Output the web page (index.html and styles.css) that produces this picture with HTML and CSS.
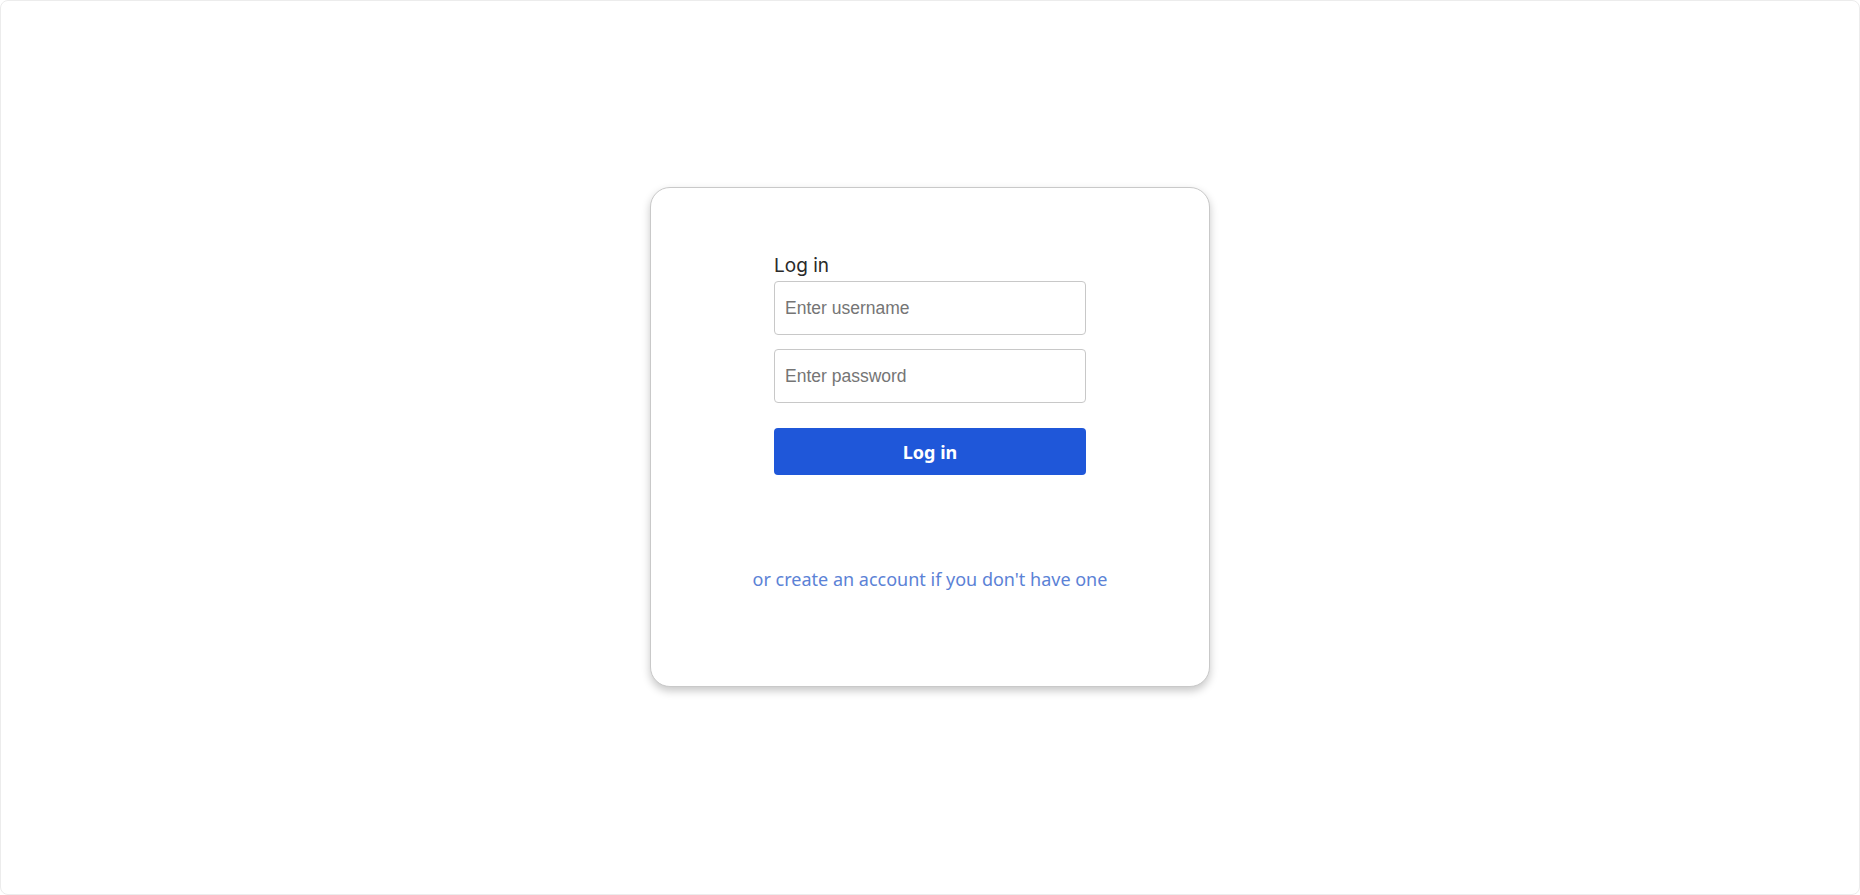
FILE: index.html
```html
<!DOCTYPE html>
<html lang="en">
<head>
<meta charset="utf-8">
<title>Log in</title>
<link rel="stylesheet" href="styles.css">
</head>
<body>
<div class="frame">
  <main class="card">
    <form class="form">
      <label class="title" for="username">Log in</label>
      <input class="field" id="username" type="text" placeholder="Enter username">
      <input class="field" id="password" type="password" placeholder="Enter password">
      <button class="btn" type="button">Log in</button>
    </form>
    <a class="link" href="#">or create an account if you don't have one</a>
  </main>
</div>
</body>
</html>
```

FILE: styles.css
```css
* { box-sizing: border-box; }
html, body { margin: 0; padding: 0; background: #ffffff; }
body { font-family: "Liberation Sans", Arial, sans-serif; }

.frame {
  height: 895px;
  border: 1px solid #ececec;
  border-radius: 8px;
  display: flex;
  justify-content: center;
  align-items: flex-start;
  padding-top: 186px;
}

.card {
  width: 560px;
  height: 500px;
  border: 1px solid #c9c9c9;
  border-radius: 20px;
  box-shadow: 0 4px 8px rgba(0, 0, 0, 0.22);
  background: #fff;
  display: flex;
  flex-direction: column;
  align-items: center;
  padding-top: 64px;
}

.form {
  width: 312px;
  display: flex;
  flex-direction: column;
}

.title {
  font-family: Inter, "Liberation Sans", sans-serif;
  font-size: 19px;
  line-height: 24px;
  color: #2a2a2a;
  padding-top: 2px;
  margin-bottom: 3px;
}

.field {
  height: 54px;
  border: 1px solid #c8c8c8;
  border-radius: 4px;
  padding: 0 10px;
  font-family: "Liberation Sans", Arial, sans-serif;
  font-size: 17.5px;
  color: #222;
  margin-bottom: 14px;
  outline: none;
}
.field::placeholder { color: #757575; }

.btn {
  margin-top: 11px;
  height: 47px;
  border: none;
  border-radius: 4px;
  background: #1f57d9;
  color: #fff;
  font-family: "Noto Sans", "Open Sans", sans-serif;
  font-weight: 700;
  font-size: 18px;
}

.link {
  margin-top: 92px;
  font-family: "Noto Sans", sans-serif;
  font-size: 18px;
  line-height: 24px;
  color: #5b82d6;
  text-decoration: none;
}
```
